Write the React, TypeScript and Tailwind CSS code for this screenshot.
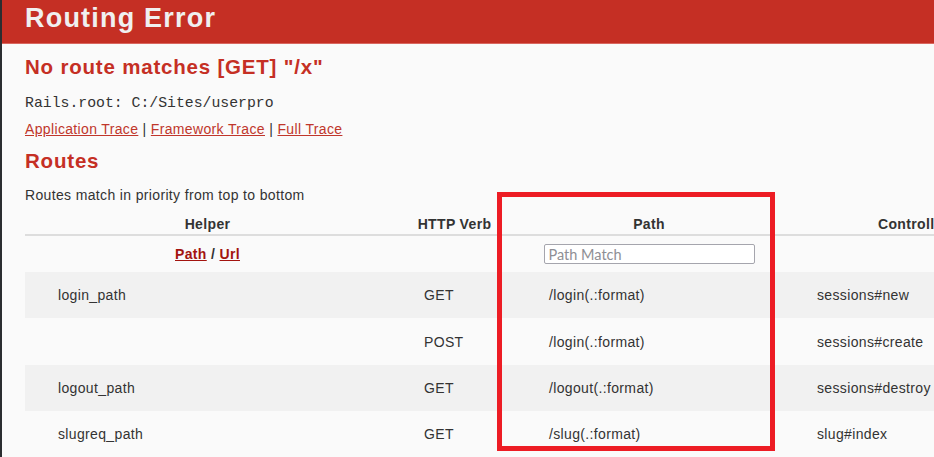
import React from "react";

type Route = {
  helper: string;
  verb: string;
  path: string;
  action: string;
};

const routes: Route[] = [
  { helper: "login_path", verb: "GET", path: "/login(.:format)", action: "sessions#new" },
  { helper: "", verb: "POST", path: "/login(.:format)", action: "sessions#create" },
  { helper: "logout_path", verb: "GET", path: "/logout(.:format)", action: "sessions#destroy" },
  { helper: "slugreq_path", verb: "GET", path: "/slug(.:format)", action: "slug#index" },
];

const rowHeights = ["h-[46px]", "h-[47px]", "h-[46px]", "h-[46px]"];

export default function App() {
  return (
    <div
      className="relative flex w-[934px] h-[457px] overflow-hidden bg-[#fafafa] text-[#333]"
      style={{ fontFamily: '"Liberation Sans", Arial, sans-serif' }}
    >
      {/* window edge */}
      <div className="w-[2px] shrink-0 bg-[#2a2d30]" />

      <div className="flex-1 min-w-0">
        {/* Header */}
        <header className="h-[44px] bg-[#c52f24] border-b border-[#d9675f] pl-[23px] pt-[4px]">
          <h1 className="text-[27px] leading-[29px] tracking-[1.2px] font-bold text-[#f0f0f0]">Routing Error</h1>
        </header>

        <div className="pl-[23px]">
          <h2 className="mt-[10px] text-[20.5px] leading-[25px] tracking-[0.8px] font-bold text-[#c52f24]">
            No route matches [GET] "/x"
          </h2>

          <p
            className="mt-[15px] text-[14.8px] leading-[18px] text-[#333]"
            style={{ fontFamily: '"Liberation Mono", "Courier New", monospace' }}
          >
            Rails.root: C:/Sites/userpro
          </p>

          <p className="mt-[8px] text-[14px] leading-[18px] tracking-[0.35px]">
            <a href="#" className="text-[#c0362b] underline">Application Trace</a>
            {" | "}
            <a href="#" className="text-[#c0362b] underline">Framework Trace</a>
            {" | "}
            <a href="#" className="text-[#c0362b] underline">Full Trace</a>
          </p>

          <h2 className="mt-[10px] text-[20.5px] leading-[25px] tracking-[0.8px] font-bold text-[#c52f24]">Routes</h2>

          <p className="mt-[13px] text-[14px] leading-[18px] tracking-[0.35px]">
            Routes match in priority from top to bottom
          </p>

          <table className="mt-[11px] table-fixed border-collapse w-[1060px] text-[14px] leading-[18px] tracking-[0.35px]">
            <colgroup>
              <col className="w-[365px]" />
              <col className="w-[129px]" />
              <col className="w-[260px]" />
              <col className="w-[306px]" />
            </colgroup>
            <thead>
              <tr className="border-b-2 border-[#ddd]">
                <th className="font-bold text-center pb-px">Helper</th>
                <th className="font-bold text-center pb-px">HTTP Verb</th>
                <th className="font-bold text-center pb-px">Path</th>
                <th className="font-bold text-left pl-[99px] pb-px whitespace-nowrap">Controller#Action</th>
              </tr>
              <tr className="h-[37px]">
                <th className="font-bold text-center">
                  <a href="#" className="text-[#a3140f] underline">Path</a>
                  <span className="text-[#333]"> / </span>
                  <a href="#" className="text-[#a3140f] underline">Url</a>
                </th>
                <th />
                <th className="text-center">
                  <input
                    placeholder="Path Match"
                    className="w-[211px] h-[20px] px-[4px] bg-white border border-[#a5a5ad] rounded-[2px] text-[14.5px] tracking-normal font-normal placeholder:text-[#8f8f95] outline-none"
                    style={{ fontFamily: "Lato, sans-serif" }}
                  />
                </th>
                <th />
              </tr>
            </thead>
            <tbody>
              {routes.map((r, i) => (
                <tr key={i} className={`${rowHeights[i]} ${i % 2 === 0 ? "bg-[#f1f1f1]" : "bg-[#fafafa]"}`}>
                  <td className="pl-[33px]">{r.helper}</td>
                  <td className="pl-[34px]">{r.verb}</td>
                  <td className="pl-[30px]">{r.path}</td>
                  <td className="pl-[38px] whitespace-nowrap">{r.action}</td>
                </tr>
              ))}
            </tbody>
          </table>
        </div>
      </div>

      {/* Annotation box drawn over the screenshot */}
      <div className="absolute left-[497px] top-[192px] w-[278px] h-[259px] border-[5px] border-[#ed1c24] pointer-events-none" />
    </div>
  );
}
